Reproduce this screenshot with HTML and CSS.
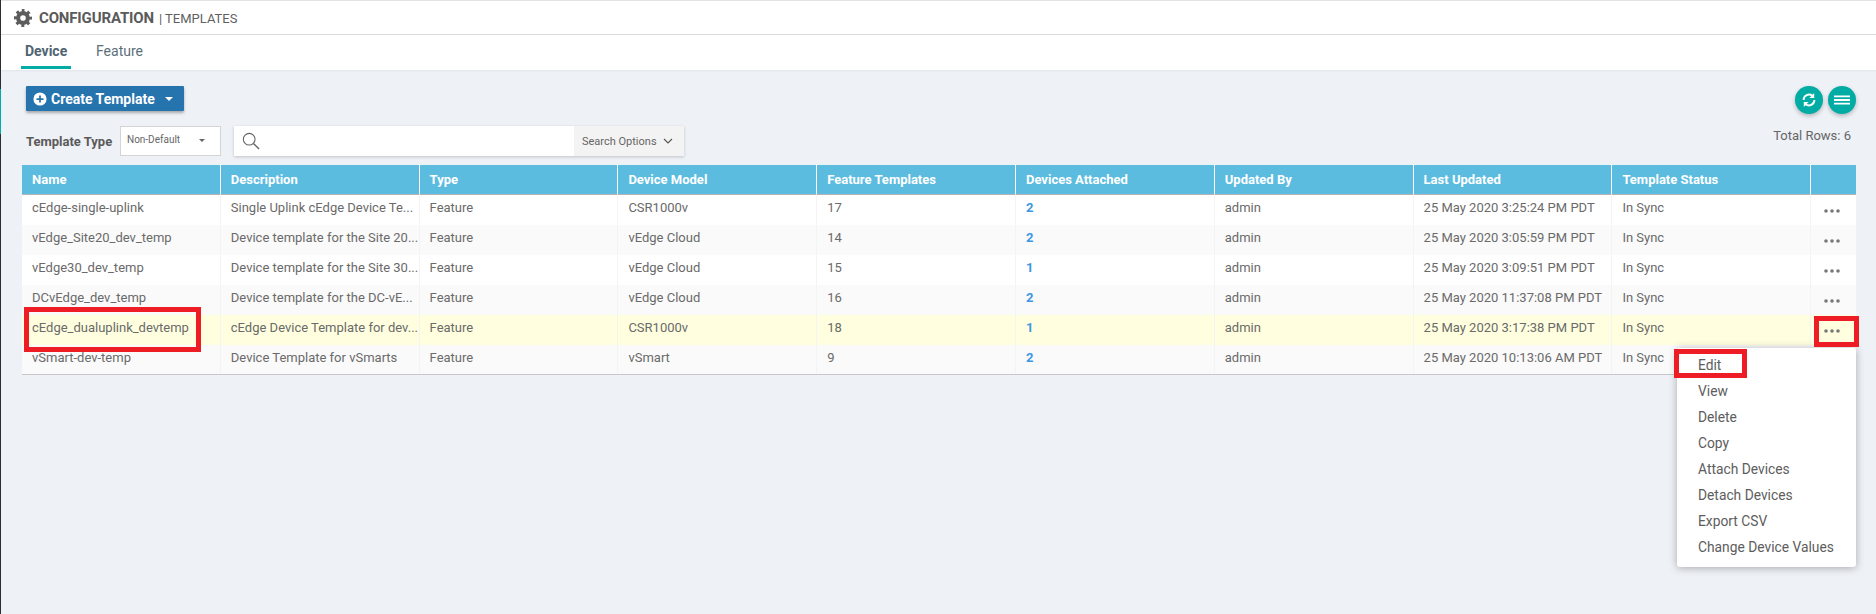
FILE: index.html
```html
<!DOCTYPE html>
<html lang="en">
<head>
<meta charset="utf-8">
<title>Configuration | Templates</title>
<link rel="stylesheet" href="styles.css">
</head>
<body>
<svg class="defs" aria-hidden="true"><symbol id="dots" viewBox="0 0 16 4"><circle cx="2" cy="2" r="1.800"/><circle cx="8" cy="2" r="1.800"/><circle cx="14" cy="2" r="1.800"/></symbol></svg>
<div class="rail"><span class="rail-mark"></span></div>
<div class="app">
  <header class="topbar">
    <svg class="gear" viewBox="0 0 24 24" aria-hidden="true"><circle cx="12" cy="12" r="6.500" fill="none" stroke="#5c5c5c" stroke-width="5.500"/><circle cx="12" cy="12" r="10" fill="none" stroke="#5c5c5c" stroke-width="4" stroke-dasharray="3.900 3.954" stroke-dashoffset="1.950" transform="rotate(-90 12 12)"/></svg>
    <span class="crumb-main">CONFIGURATION</span>
    <span class="crumb-sub">| TEMPLATES</span>
  </header>
  <nav class="tabs">
    <a class="tab tab-active">Device</a>
    <a class="tab">Feature</a>
  </nav>
  <main class="content">
    <div class="toolbar">
      <div class="toolbar-left">
        <button class="create-btn">
          <svg class="plus" viewBox="0 0 16 16" aria-hidden="true"><circle cx="8" cy="8" r="7.500" fill="#fff"/><path d="M8 4v8M4 8h8" stroke="#2574ae" stroke-width="2"/></svg>
          <span>Create Template</span>
          <span class="caret"></span>
        </button>
        <div class="filters">
          <span class="filter-label">Template Type</span>
          <div class="select"><span>Non-Default</span><span class="select-caret"></span></div>
          <div class="search">
            <div class="search-input">
              <svg class="search-icon" viewBox="0 0 20 20" aria-hidden="true"><circle cx="8" cy="8" r="6.500" fill="none" stroke="#666" stroke-width="1.200"/><path d="M12.700 12.700L19 19" stroke="#666" stroke-width="1.500"/></svg>
            </div>
            <div class="search-options">
              <span>Search Options</span>
              <svg class="chev" viewBox="0 0 10 6" aria-hidden="true"><path d="M1 1l4 4 4-4" fill="none" stroke="#555" stroke-width="1.100"/></svg>
            </div>
          </div>
        </div>
      </div>
      <div class="toolbar-right">
        <div class="fabs">
          <span class="fab">
            <svg viewBox="0 0 16 16" aria-hidden="true"><path d="M2.600 8A5.400 5.400 0 0 1 11.400 3.800M13.400 8A5.400 5.400 0 0 1 4.600 12.200" fill="none" stroke="#fff" stroke-width="1.900"/><path d="M13.200 1v5H8.400zM2.800 15v-5h4.800z" fill="#fff"/></svg>
          </span>
          <span class="fab">
            <svg viewBox="0 0 16 16" aria-hidden="true"><path d="M0 4.300h16M0 8h16M0 11.700h16" stroke="#fff" stroke-width="1.800"/></svg>
          </span>
        </div>
        <div class="total">Total Rows: 6</div>
      </div>
    </div>

    <table class="grid">
      <thead>
        <tr>
          <th>Name</th><th>Description</th><th>Type</th><th>Device Model</th><th>Feature Templates</th><th>Devices Attached</th><th>Updated By</th><th>Last Updated</th><th>Template Status</th><th></th>
        </tr>
      </thead>
      <tbody>
        <tr><td>cEdge-single-uplink</td><td>Single Uplink cEdge Device Te...</td><td>Feature</td><td>CSR1000v</td><td>17</td><td><a class="link">2</a></td><td>admin</td><td>25 May 2020 3:25:24 PM PDT</td><td>In Sync</td><td class="dots"><svg class="dots-icon"><use href="#dots"/></svg></td></tr>
        <tr><td>vEdge_Site20_dev_temp</td><td>Device template for the Site 20...</td><td>Feature</td><td>vEdge Cloud</td><td>14</td><td><a class="link">2</a></td><td>admin</td><td>25 May 2020 3:05:59 PM PDT</td><td>In Sync</td><td class="dots"><svg class="dots-icon"><use href="#dots"/></svg></td></tr>
        <tr><td>vEdge30_dev_temp</td><td>Device template for the Site 30...</td><td>Feature</td><td>vEdge Cloud</td><td>15</td><td><a class="link">1</a></td><td>admin</td><td>25 May 2020 3:09:51 PM PDT</td><td>In Sync</td><td class="dots"><svg class="dots-icon"><use href="#dots"/></svg></td></tr>
        <tr><td>DCvEdge_dev_temp</td><td>Device template for the DC-vE...</td><td>Feature</td><td>vEdge Cloud</td><td>16</td><td><a class="link">2</a></td><td>admin</td><td>25 May 2020 11:37:08 PM PDT</td><td>In Sync</td><td class="dots"><svg class="dots-icon"><use href="#dots"/></svg></td></tr>
        <tr class="selected"><td>cEdge_dualuplink_devtemp</td><td>cEdge Device Template for dev...</td><td>Feature</td><td>CSR1000v</td><td>18</td><td><a class="link">1</a></td><td>admin</td><td>25 May 2020 3:17:38 PM PDT</td><td>In Sync</td><td class="dots"><svg class="dots-icon"><use href="#dots"/></svg></td></tr>
        <tr><td>vSmart-dev-temp</td><td>Device Template for vSmarts</td><td>Feature</td><td>vSmart</td><td>9</td><td><a class="link">2</a></td><td>admin</td><td>25 May 2020 10:13:06 AM PDT</td><td>In Sync</td><td class="dots"></td></tr>
      </tbody>
    </table>
  </main>
</div>

<ul class="menu">
  <li>Edit</li><li>View</li><li>Delete</li><li>Copy</li><li>Attach Devices</li><li>Detach Devices</li><li>Export CSV</li><li>Change Device Values</li>
</ul>
<div class="callout callout-name"></div>
<div class="callout callout-dots"></div>
<div class="callout callout-edit"></div>
</body>
</html>
```
FILE: styles.css
```css
* { box-sizing: border-box; }
html, body { margin: 0; height: 614px; overflow: hidden; }
body {
  position: relative;
  display: flex;
  font-family: Roboto, "Liberation Sans", sans-serif;
  font-size: 13px;
  color: #5d5d5d;
  background: #eef1f6;
}
.defs { display: none; }
.rail { width: 1px; flex: none; background: #2d2d33; padding-top: 89px; }
.rail-mark { display: block; height: 45px; background: #00aca4; }
.app { flex: 1; min-width: 0; display: flex; flex-direction: column; }

.topbar {
  height: 35px;
  display: flex;
  align-items: center;
  padding: 1px 0 0 13px;
  background: #fff;
  border-top: 1px solid #e3e3e3;
  border-bottom: 1px solid #dcdcdc;
}
.gear { width: 18px; height: 18px; flex: none; }
.crumb-main { margin-left: 7px; font-size: 15px; font-weight: 700; color: #5a5a5a; letter-spacing: -.15px; }
.crumb-sub { margin-left: 5px; font-size: 13px; color: #5f5f5f; }

.tabs {
  height: 35px;
  display: flex;
  padding-left: 20px;
  background: #fff;
  box-shadow: 0 1px 2px rgba(0, 0, 0, .06);
}
.tab { padding: 0 4px; height: 34px; margin-right: 21px; line-height: 32px; font-size: 14px; color: #5b6f7a; }
.tab-active { width: 50px; font-weight: 700; border-bottom: 3px solid #00aca4; color: #4f6470; }

.content { flex: 1; padding: 0 20px 0 21px; }
.toolbar { display: flex; justify-content: space-between; height: 95px; padding-top: 16px; }
.toolbar-left { display: flex; flex-direction: column; padding-left: 4px; }
.create-btn {
  width: 158px;
  height: 25px;
  display: flex;
  align-items: center;
  padding: 0 0 0 7px;
  border: 0;
  border-radius: 1px;
  background: #2574ae;
  color: #fff;
  font: 700 14px Roboto, "Liberation Sans", sans-serif;
  box-shadow: 0 2px 3px rgba(0, 0, 0, .3);
}
.plus { width: 14px; height: 14px; margin-right: 4px; }
.caret { margin-left: 10px; border: 4.500px solid transparent; border-top-color: #fff; border-bottom: 0; }

.filters { display: flex; align-items: center; margin-top: 15px; }
.filter-label { width: 94px; font-size: 13px; font-weight: 700; color: #5a5a5a; }
.select {
  width: 101px;
  height: 30px;
  display: flex;
  justify-content: space-between;
  align-items: center;
  padding: 0 15px 4px 6px;
  background: #fff;
  border: 1px solid #d4d4d4;
  font-size: 10px;
  color: #666;
}
.select-caret { border: 3.500px solid transparent; border-top-color: #666; border-bottom: 0; margin-top: 3px; }
.search {
  width: 450px;
  height: 30px;
  display: flex;
  margin-left: 13px;
  background: #fff;
  box-shadow: 0 1px 3px rgba(0, 0, 0, .2);
}
.search-input { flex: 1; display: flex; align-items: center; padding-left: 8px; }
.search-icon { width: 18px; height: 18px; }
.search-options {
  width: 110px;
  display: flex;
  align-items: center;
  padding-left: 8px;
  background: #f3f3f3;
  font-size: 11px;
  color: #666;
}
.chev { width: 10px; height: 6px; margin-left: 6px; }

.toolbar-right { display: flex; flex-direction: column; align-items: flex-end; }
.fabs { display: flex; gap: 5px; }
.fab {
  width: 28px;
  height: 28px;
  display: flex;
  align-items: center;
  justify-content: center;
  border-radius: 50%;
  background: #00aca4;
  box-shadow: 0 2px 4px rgba(0, 0, 0, .25);
}
.fab svg { width: 16px; height: 16px; }
.total { margin: 14px 5px 0 0; font-size: 13px; color: #666; }

.grid { width: 1834px; table-layout: fixed; border-collapse: separate; border-spacing: 0; border-bottom: 1px solid #c8c8c8; }
.grid th, .grid td {
  width: 198.800px;
  height: 30px;
  padding: 0 0 0 10px;
  overflow: hidden;
  white-space: nowrap;
  text-align: left;
  border-right: 1px solid #f4f4f4;
}
.grid th:last-child, .grid td:last-child { width: 45px; padding: 0; border-right: 0; }
.grid th {
  background: #5bbcdf;
  color: #fff;
  font-weight: 700;
  font-size: 13px;
  border-right: 1px solid #fff;
  border-bottom: 1px solid #b5b5b5;
  padding-bottom: 1px;
}
.grid td { background: #fff; padding-bottom: 5px; font-size: 13px; color: #6a6a6a; }
.grid tbody tr:last-child td { height: 29px; }
.grid tbody tr:nth-child(even) td { background: #fafafa; }
.grid tbody tr.selected td { background: #ffffdf; }
.grid td.dots { padding: 1px 3px 0 0; text-align: center; fill: #777; }
.dots-icon { display: block; width: 16px; height: 4px; margin: 0 auto; }
.link { color: #3b97e3; font-weight: 700; }

.menu {
  position: absolute;
  left: 1677px;
  top: 348px;
  width: 179px;
  height: 219px;
  margin: 0;
  padding: 4px 0 6px;
  list-style: none;
  background: #fff;
  border-radius: 3px;
  box-shadow: 0 1px 8px rgba(0, 0, 0, .3);
}
.menu li { height: 26px; line-height: 26px; padding-left: 21px; font-size: 13.800px; color: #5d5d5d; }

.callout { position: absolute; border: 5px solid #ee1c25; }
.callout-name { left: 24px; top: 307px; width: 177px; height: 45px; }
.callout-dots { left: 1814px; top: 316px; width: 45px; height: 31px; }
.callout-edit { left: 1674px; top: 349px; width: 73px; height: 29px; }
```
